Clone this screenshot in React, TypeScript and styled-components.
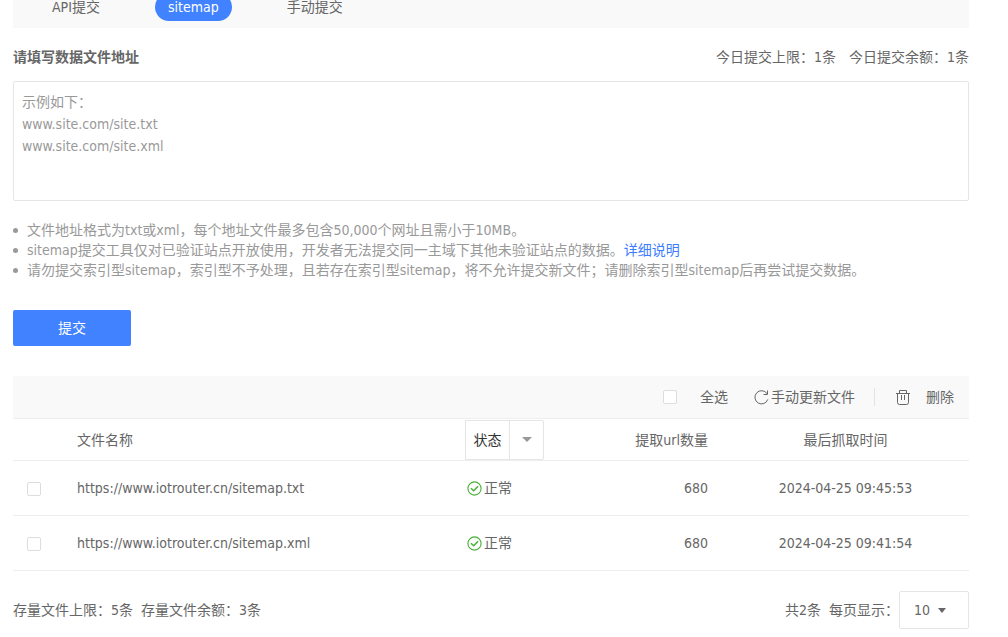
import React from 'react';
import styled, { createGlobalStyle } from 'styled-components';

const GlobalStyle = createGlobalStyle`
  *, *::before, *::after { box-sizing: border-box; }
  body {
    margin: 0;
    background: #fff;
    color: #666;
    font: 14px/20px "DejaVu Sans Condensed", "Noto Sans CJK SC", sans-serif;
  }
  button, input, select, textarea { font: inherit; color: inherit; }
`;

const Page = styled.main`
  margin: -14px 39px 0 13px;
`;

const Tabs = styled.nav`
  display: flex;
  align-items: center;
  gap: 29px;
  height: 42px;
  padding-left: 26px;
  background: #f9f9f9;
`;

const Tab = styled.button<{ $active?: boolean }>`
  height: 28px;
  padding: 0 13px;
  border: 0;
  border-radius: 14px;
  background: ${(p) => (p.$active ? '#4082ff' : 'transparent')};
  color: ${(p) => (p.$active ? '#fff' : '#666')};
  margin: 0 ${(p) => (p.$active ? '13px' : '0')};
  cursor: pointer;
`;

const FieldHeader = styled.div`
  display: flex;
  justify-content: space-between;
  margin: 19px 0 14px;
`;

const FieldTitle = styled.label`
  font-weight: 700;
`;

const Quotas = styled.div<{ $gap: number }>`
  display: flex;
  align-items: center;
  gap: ${(p) => p.$gap}px;
`;

const UrlInput = styled.textarea`
  display: block;
  width: 100%;
  height: 120px;
  padding: 9px 8px;
  border: 1px solid #e5e5e5;
  border-radius: 2px;
  line-height: 22px;
  resize: none;
  outline: none;
  &::placeholder { color: #999; opacity: 1; }
`;

const Notes = styled.ul`
  margin: 19px 0 30px;
  padding: 0;
  list-style: none;
  color: #999;
`;

const Note = styled.li`
  display: flex;
  align-items: center;
  gap: 9px;
  &::before {
    content: '';
    width: 5px;
    height: 5px;
    border-radius: 50%;
    background: #999;
    flex: none;
  }
`;

const Link = styled.a`
  color: #3b7cff;
  text-decoration: none;
`;

const Submit = styled.button`
  display: block;
  width: 118px;
  height: 36px;
  border: 0;
  border-radius: 2px;
  background: #4082ff;
  color: #fff;
  cursor: pointer;
`;

const Toolbar = styled.div`
  display: flex;
  align-items: center;
  justify-content: flex-end;
  height: 43px;
  margin-top: 30px;
  padding-right: 15px;
  border-bottom: 1px solid #eee;
  background: #f9f9f9;
`;

const SelectAll = styled.label`
  display: flex;
  align-items: center;
  gap: 23px;
  margin-right: 26px;
`;

const Checkbox = styled.input.attrs({ type: 'checkbox' })`
  appearance: none;
  display: block;
  width: 14px;
  height: 14px;
  margin: 0;
  border: 1px solid #ddd;
  border-radius: 2px;
  background: #fff;
  &:checked { background: #4082ff; border-color: #4082ff; }
`;

const ToolButton = styled.button<{ $gap: number }>`
  display: flex;
  align-items: center;
  gap: ${(p) => p.$gap}px;
  padding: 0;
  border: 0;
  background: none;
  cursor: pointer;
`;

const Divider = styled.span`
  width: 1px;
  height: 18px;
  margin: 0 21px 0 19px;
  background: #e2e2e2;
`;

const Table = styled.table`
  width: 100%;
  border-collapse: separate;
  border-spacing: 0;
  table-layout: fixed;
`;

const Col = styled.col<{ $width?: number }>`
  width: ${(p) => (p.$width ? `${p.$width}px` : 'auto')};
`;

type Align = 'left' | 'right' | 'center';

const HeadCell = styled.th<{ $align?: Align }>`
  height: 42px;
  padding: 0 ${(p) => (p.$align === 'right' ? 14 : 0)}px 0 0;
  border-bottom: 1px solid #eee;
  font-weight: 400;
  text-align: ${(p) => p.$align ?? 'left'};
`;

const Cell = styled.td<{ $align?: Align }>`
  height: 55px;
  padding: 0 ${(p) => (p.$align === 'right' ? 14 : 0)}px 0 0;
  border-bottom: 1px solid #eee;
  text-align: ${(p) => p.$align ?? 'left'};
`;

const CheckCell = styled(Cell)`
  padding: 2px 0 0 14px;
`;

const StatusFilter = styled.button`
  display: flex;
  width: 79px;
  height: 40px;
  padding: 0;
  border: 1px solid #e5e5e5;
  border-radius: 0 2px 2px 0;
  background: #fff;
  color: #333;
  cursor: pointer;
`;

const FilterPart = styled.span<{ $caret?: boolean }>`
  display: flex;
  align-items: center;
  justify-content: center;
  flex: ${(p) => (p.$caret ? '1' : '0 0 43px')};
  height: 100%;
  border-left: ${(p) => (p.$caret ? '1px solid #e5e5e5' : '0')};
`;

const Status = styled.span`
  display: flex;
  align-items: center;
  gap: 2px;
  padding-left: 2px;
`;

const Footer = styled.footer`
  display: flex;
  align-items: center;
  justify-content: space-between;
  margin: 20px 0 8px;
`;

const Pager = styled.div`
  display: flex;
  align-items: center;
`;

const SizeLabel = styled.label`
  margin-left: 8px;
`;

const SizeBox = styled.span`
  position: relative;
  display: block;
  svg {
    position: absolute;
    top: 17px;
    right: 23px;
    pointer-events: none;
  }
`;

const SizeSelect = styled.select`
  appearance: none;
  display: block;
  width: 70px;
  height: 38px;
  padding: 0 30px 0 14px;
  border: 1px solid #e5e5e5;
  border-radius: 2px;
  background: #fff;
`;

const Caret = ({ width, color }: { width: number; color: string }) => (
  <svg width={width} height={5} viewBox="0 0 10 5" preserveAspectRatio="none" aria-hidden="true">
    <path d="M0 0h10L5 5z" fill={color} />
  </svg>
);

const RefreshIcon = () => (
  <svg width="15" height="16" viewBox="0 0 15 16" fill="none" stroke="#666" aria-hidden="true">
    <path d="M13 4.600A6.600 6.600 0 1 0 13.800 10.400" />
    <path d="M13.500 1.500v4h-4" />
  </svg>
);

const TrashIcon = () => (
  <svg width="14" height="15" viewBox="0 0 14 15" fill="none" stroke="#666" aria-hidden="true">
    <path d="M0 3.500h14M3.500 3.500v-3h7v3M1.500 3.500v9q0 2 2 2h7q2 0 2-2v-9M5.500 5v5M8.500 5v5" />
  </svg>
);

const CheckIcon = () => (
  <svg width="15" height="15" viewBox="0 0 15 15" fill="none" stroke="#45b035" aria-hidden="true">
    <circle cx="7.500" cy="7.500" r="6.600" strokeWidth="1.100" />
    <path d="M4 7.300l2.700 2.500 4.400-4.500" strokeWidth="1.500" />
  </svg>
);

const files = [
  { url: 'https://www.iotrouter.cn/sitemap.txt', count: 680, time: '2024-04-25 09:45:53' },
  { url: 'https://www.iotrouter.cn/sitemap.xml', count: 680, time: '2024-04-25 09:41:54' },
];

export default function App() {
  return (
    <>
      <GlobalStyle />
      <Page>
        <Tabs>
          <Tab>API提交</Tab>
          <Tab $active>sitemap</Tab>
          <Tab>手动提交</Tab>
        </Tabs>

        <FieldHeader>
          <FieldTitle htmlFor="urls">请填写数据文件地址</FieldTitle>
          <Quotas $gap={13}>
            <span>今日提交上限：1条</span>
            <span>今日提交余额：1条</span>
          </Quotas>
        </FieldHeader>
        <UrlInput id="urls" placeholder={'示例如下：\nwww.site.com/site.txt\nwww.site.com/site.xml'} />

        <Notes>
          <Note>文件地址格式为txt或xml，每个地址文件最多包含50,000个网址且需小于10MB。</Note>
          <Note>
            <span>
              sitemap提交工具仅对已验证站点开放使用，开发者无法提交同一主域下其他未验证站点的数据。
              <Link href="#help">详细说明</Link>
            </span>
          </Note>
          <Note>
            请勿提交索引型sitemap，索引型不予处理，且若存在索引型sitemap，将不允许提交新文件；请删除索引型sitemap后再尝试提交数据。
          </Note>
        </Notes>

        <Submit>提交</Submit>

        <Toolbar>
          <SelectAll>
            <Checkbox />
            全选
          </SelectAll>
          <ToolButton $gap={2}>
            <RefreshIcon />
            手动更新文件
          </ToolButton>
          <Divider />
          <ToolButton $gap={16}>
            <TrashIcon />
            删除
          </ToolButton>
        </Toolbar>

        <Table>
          <colgroup>
            <Col $width={64} />
            <Col />
            <Col $width={100} />
            <Col $width={157} />
            <Col $width={247} />
          </colgroup>
          <thead>
            <tr>
              <HeadCell />
              <HeadCell>文件名称</HeadCell>
              <HeadCell>
                <StatusFilter>
                  <FilterPart>状态</FilterPart>
                  <FilterPart $caret>
                    <Caret width={10} color="#999" />
                  </FilterPart>
                </StatusFilter>
              </HeadCell>
              <HeadCell $align="right">提取url数量</HeadCell>
              <HeadCell $align="center">最后抓取时间</HeadCell>
            </tr>
          </thead>
          <tbody>
            {files.map((file) => (
              <tr key={file.url}>
                <CheckCell>
                  <Checkbox aria-label={file.url} />
                </CheckCell>
                <Cell>{file.url}</Cell>
                <Cell>
                  <Status>
                    <CheckIcon />
                    正常
                  </Status>
                </Cell>
                <Cell $align="right">{file.count}</Cell>
                <Cell $align="center">{file.time}</Cell>
              </tr>
            ))}
          </tbody>
        </Table>

        <Footer>
          <Quotas $gap={8}>
            <span>存量文件上限：5条</span>
            <span>存量文件余额：3条</span>
          </Quotas>
          <Pager>
            <span>共2条</span>
            <SizeLabel htmlFor="size">每页显示：</SizeLabel>
            <SizeBox>
              <SizeSelect id="size" defaultValue="10">
                <option>10</option>
                <option>20</option>
                <option>50</option>
              </SizeSelect>
              <Caret width={8} color="#666" />
            </SizeBox>
          </Pager>
        </Footer>
      </Page>
    </>
  );
}
